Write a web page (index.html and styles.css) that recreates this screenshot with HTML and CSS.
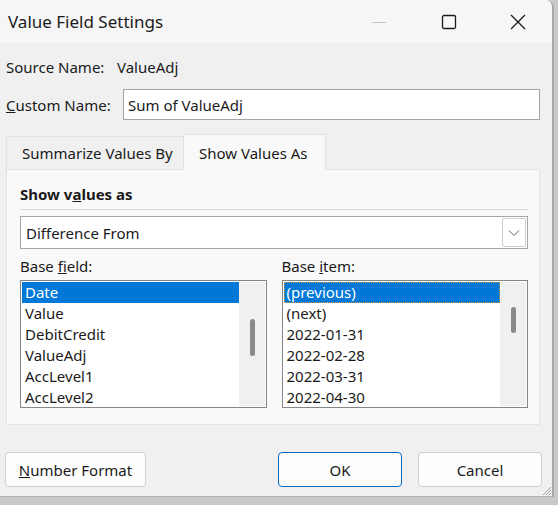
FILE: index.html
```html
<!DOCTYPE html>
<html lang="en">
<head>
  <meta charset="UTF-8" />
  <meta name="viewport" content="width=device-width, initial-scale=1.0" />
  <title>Value Field Settings</title>
  <link rel="stylesheet" href="styles.css">
</head>
<body>
  <div class="window">
    <div class="titlebar">
      <span class="title">Value Field Settings</span>
      <div class="caption">
        <span class="cap-btn"><svg width="16" height="16" viewBox="0 0 16 16"><line x1="1" y1="8.5" x2="15" y2="8.5" stroke="#c4c4c4" stroke-width="1"/></svg></span>
        <span class="cap-btn"><svg width="16" height="16" viewBox="0 0 16 16"><rect x="1.5" y="1.5" width="13" height="13" rx="1.5" fill="none" stroke="#1b1b1b" stroke-width="1.3"/></svg></span>
        <span class="cap-btn"><svg width="16" height="16" viewBox="0 0 16 16"><path d="M1 1 L15 15 M15 1 L1 15" stroke="#1b1b1b" stroke-width="1.3"/></svg></span>
      </div>
    </div>

    <div class="content">
      <div class="field-row source-row">
        <span class="label">Source Name:</span>
        <span>ValueAdj</span>
      </div>
      <div class="field-row custom-row">
        <span class="label custom-label"><u>C</u>ustom Name:</span>
        <input type="text" class="name-input" value="Sum of ValueAdj" />
      </div>

      <div class="tabs">
        <span class="tab">Summarize Values By</span>
        <span class="tab tab-active">Show Values As</span>
      </div>
      <div class="panel">
        <div class="heading">Show v<u>a</u>lues as</div>
        <div class="separator"></div>
        <div class="dropdown">
          <span>Difference From</span>
          <span class="drop-btn"><svg width="12" height="8" viewBox="0 0 12 8"><path d="M1 1.5 L6 6.5 L11 1.5" fill="none" stroke="#5f5f5f" stroke-width="1"/></svg></span>
        </div>
        <div class="columns">
          <div class="column">
            <div class="col-label">Base <u>f</u>ield:</div>
            <div class="listbox">
              <div class="items">
                <div class="item selected">Date</div>
                <div class="item">Value</div>
                <div class="item">DebitCredit</div>
                <div class="item">ValueAdj</div>
                <div class="item">AccLevel1</div>
                <div class="item">AccLevel2</div>
              </div>
              <div class="scrolltrack"><span class="thumb thumb-left"></span></div>
            </div>
          </div>
          <div class="column">
            <div class="col-label">Base <u>i</u>tem:</div>
            <div class="listbox">
              <div class="items">
                <div class="item selected focused">(previous)</div>
                <div class="item">(next)</div>
                <div class="item">2022-01-31</div>
                <div class="item">2022-02-28</div>
                <div class="item">2022-03-31</div>
                <div class="item">2022-04-30</div>
              </div>
              <div class="scrolltrack"><span class="thumb thumb-right"></span></div>
            </div>
          </div>
        </div>
      </div>

      <div class="buttons">
        <button class="btn btn-format"><u>N</u>umber Format</button>
        <button class="btn btn-ok">OK</button>
        <button class="btn btn-cancel">Cancel</button>
      </div>
    </div>

    <svg class="grip" width="12" height="12" viewBox="0 0 12 12">
      <path d="M11 3 L3 11 M11 6 L6 11 M11 9 L9 11" stroke="#a0a0a0" stroke-width="1"/>
    </svg>
  </div>
</body>
</html>
```

FILE: styles.css
```css
body {
  margin: 0;
  background-color: #c9c9c9;
  font-family: 'Segoe UI', 'Noto Sans', sans-serif;
  font-size: 15px;
  color: #1a1a1a;
}
.window {
  position: relative;
  width: 552px;
  height: 496px;
  background-color: #f0f0f0;
  border-right: 2px solid #a9a9a9;
  border-bottom: 1px solid #b0b0b0;
  border-top-right-radius: 8px;
  overflow: hidden;
}
.titlebar {
  height: 43px;
  background-color: #f6f6f6;
  display: flex;
  align-items: center;
}
.title {
  padding-left: 8px;
  font-size: 17px;
  color: #1b1b1b;
}
.caption {
  margin-left: auto;
  display: flex;
}
.cap-btn {
  width: 70px;
  height: 43px;
  display: flex;
  align-items: center;
  justify-content: center;
}
.cap-btn:last-child {
  width: 68px;
}
.content {
  padding: 0 12px 0 6px;
}
.field-row {
  display: flex;
  align-items: center;
}
.source-row {
  height: 20px;
  margin-top: 14px;
}
.label {
  width: 111px;
}
.custom-row {
  margin-top: 12px;
}
.custom-label {
  width: 117px;
}
.name-input {
  flex: 1;
  height: 31px;
  box-sizing: border-box;
  border: 1px solid #a5a5a5;
  padding: 0 4px;
  font-family: inherit;
  font-size: 15px;
  color: #1a1a1a;
  background-color: white;
}
.tabs {
  display: flex;
  align-items: flex-end;
  margin-top: 13px;
  height: 36px;
}
.tab {
  height: 33px;
  box-sizing: border-box;
  padding: 0 0 0 15px;
  width: 178px;
  flex-shrink: 0;
  white-space: nowrap;
  display: flex;
  align-items: center;
  background-color: #f0f0f0;
  border: 1px solid #e1e1e1;
  border-bottom: none;
}
.tab-active {
  width: 142px;
  height: 36px;
  padding-left: 15px;
  background-color: #f9f9f9;
  border-left: none;
  position: relative;
  top: 1px;
}
.panel {
  height: 256px;
  box-sizing: border-box;
  background-color: #f9f9f9;
  border: 1px solid #e4e4e4;
  padding: 14px 11px 0 13px;
}
.heading {
  font-weight: bold;
  line-height: 20px;
  height: 20px;
}
.separator {
  height: 1px;
  background-color: #dcdcdc;
  margin-top: 5px;
}
.dropdown {
  margin-top: 6px;
  height: 33px;
  box-sizing: border-box;
  border: 1px solid #a6a6a6;
  background-color: white;
  display: flex;
  align-items: center;
  padding-left: 5px;
}
.drop-btn {
  margin-left: auto;
  margin-right: 1px;
  width: 24px;
  height: 29px;
  box-sizing: border-box;
  border: 1px solid #cfcfcf;
  border-radius: 2px;
  display: flex;
  align-items: center;
  justify-content: center;
}
.columns {
  display: flex;
  gap: 15px;
  margin-top: 7px;
}
.column {
  flex: 1;
}
.col-label {
  line-height: 20px;
  height: 20px;
}
.listbox {
  margin-top: 4px;
  height: 128px;
  box-sizing: border-box;
  border: 1px solid #868686;
  background-color: white;
  padding: 1px;
  display: flex;
}
.items {
  flex: 1;
  overflow: hidden;
}
.item {
  height: 21px;
  line-height: 21px;
  padding-left: 3px;
  white-space: nowrap;
}
.selected {
  background-color: #0078d7;
  color: white;
}
.focused {
  outline: 1px dotted #e09a48;
  outline-offset: -1px;
}
.scrolltrack {
  width: 26px;
  background-color: #f0f0f0;
  position: relative;
}
.thumb {
  position: absolute;
  left: 11px;
  width: 5px;
  border-radius: 3px;
  background-color: #8a8a8a;
}
.thumb-left {
  top: 37px;
  height: 37px;
}
.thumb-right {
  top: 25px;
  height: 26px;
}
.buttons {
  display: flex;
  margin-top: 27px;
}
.btn {
  height: 35px;
  box-sizing: border-box;
  background-color: #fdfdfd;
  border: 1px solid #d0d0d0;
  border-radius: 4px;
  font-family: inherit;
  font-size: 15px;
  color: #1a1a1a;
  padding: 0;
}
.btn-format {
  width: 141px;
  margin-left: -1px;
}
.btn-ok {
  width: 124px;
  margin-left: auto;
  border-color: #0067c0;
}
.btn-cancel {
  width: 124px;
  margin-left: 16px;
  margin-right: -2px;
}
.grip {
  position: absolute;
  right: 0;
  bottom: 0;
}
```
